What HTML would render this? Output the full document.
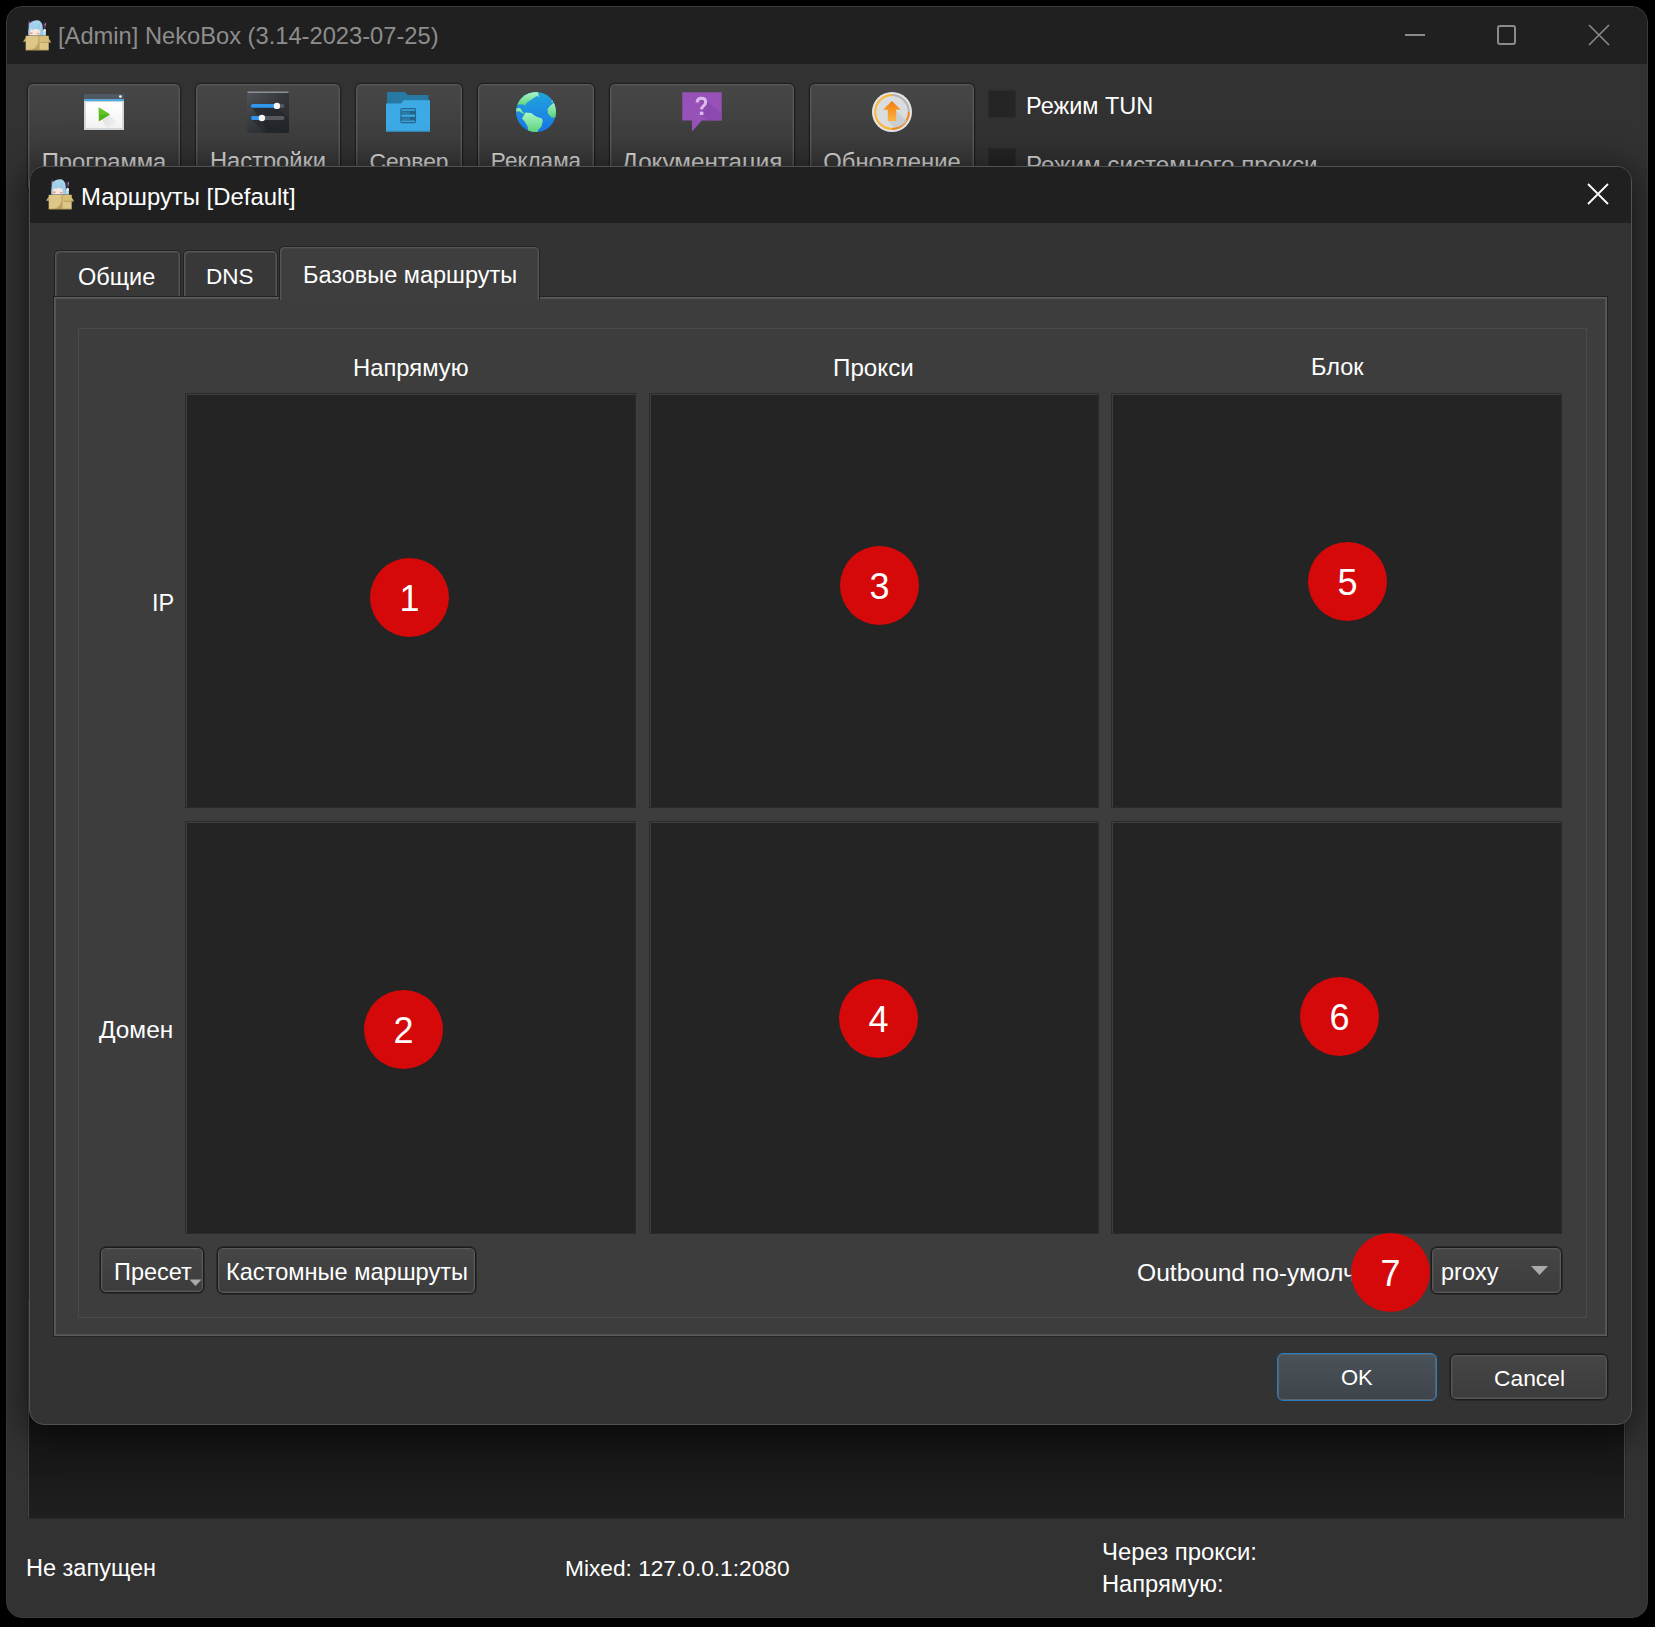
<!DOCTYPE html>
<html><head><meta charset="utf-8">
<style>
*{margin:0;padding:0;box-sizing:border-box}
html,body{width:1655px;height:1627px;overflow:hidden;background:#000}
body{position:relative;font-family:"Liberation Sans",sans-serif;color:#fff}
.a{position:absolute}
.t{position:absolute;white-space:nowrap;line-height:1;font-size:23.5px}
#win{left:6px;top:6px;width:1642px;height:1612px;background:#323232;border:1px solid #3a3a3a;border-radius:16px;overflow:hidden}
#wtitle{left:0;top:0;width:100%;height:57px;background:#202020}
.tb{position:absolute;top:77px;height:110px;border:1px solid #1f1f1f;border-radius:6px;background:linear-gradient(#474747,#3a3a3a 70%);box-shadow:0 0 0 0.6px #282828,inset 0 0 0 1px #5a5a5a,inset 0 0 0 1.7px #4c4c4c}
.tbl{position:absolute;left:0;right:0;top:66px;text-align:center;font-size:23.5px;color:#ddd;line-height:1;white-space:nowrap}
.cb{position:absolute;width:28px;height:28px;background:#252525;border:1px solid #2b2b2b}
#list{left:27px;top:1300px;width:1599px;height:219px;background:linear-gradient(#121212 0%,#141414 55%,#1f1f1f 100%);border:1px solid #2a2a2a;border-top:none;box-shadow:inset 1px 0 0 #474747,inset -1px 0 0 #474747}
#dlg{left:29px;top:166px;width:1603px;height:1259px;background:#333;border:1px solid #525252;border-radius:15px;overflow:hidden;box-shadow:0 6px 36px 4px rgba(0,0,0,.55)}
#dtitle{left:0;top:0;width:100%;height:56px;background:#202020}
.tab{position:absolute;background:#383838;border:1px solid #222;border-bottom:none;border-radius:5px 5px 0 0;box-shadow:inset 1px 1px 0 #575757,inset -1px 0 0 #575757,inset 2px 2px 0 #454545,inset -2px 0 0 #454545}
#pane{left:53px;top:296px;width:1555px;height:1041px;background:#3d3d3d;border:1px solid #222;box-shadow:inset 0 0 0 1px #5a5a5a,inset 0 0 0 2px #525252}
#grp{left:78px;top:328px;width:1509px;height:990px;border:1px solid #4a4a4a}
.cell{position:absolute;background:#242424;border:1px solid #2b2b2b;box-shadow:inset 1px 1px 0 #3e3e3e}
.dot{position:absolute;width:79px;height:79px;border-radius:50%;background:#d50909;color:#fff;font-size:36px;text-align:center;line-height:81px}
.btn{position:absolute;border:1px solid #1b1b1b;border-radius:6px;background:linear-gradient(#464646,#3c3c3c);box-shadow:0 0 0 0.7px #262626,inset 0 0 0 1px #5a5a5a,inset 0 0 0 1.7px #4a4a4a}
</style></head>
<body>
<div id="win" class="a">
  <div id="wtitle" class="a"></div>
</div>

<!-- title bar content -->
<svg class="a" style="left:23px;top:19px" width="28" height="32" viewBox="0 0 28 32">
  <defs><linearGradient id="haira" x1="0" y1="0" x2="0" y2="1"><stop offset="0" stop-color="#a9d6ee"/><stop offset="1" stop-color="#9ccbe6"/></linearGradient></defs>
  <path d="M5.5 0.5 L9 4 L6 8 L4.5 7 Z" fill="#2c3142"/><path d="M6 2.5 L7.5 5 L5.5 7 Z" fill="#d88a9a"/>
  <path d="M19.5 4 L23.8 2.8 L22.5 10 L19.5 9 Z" fill="#2c3142"/><path d="M21.5 5 L23 4 L22 9 Z" fill="#d88a9a"/>
  <path d="M5.2 16.5 Q4.8 6 8 3 Q12 0.5 16 1.5 Q19.8 3.5 19.8 9 L19.8 16.5 Z" fill="url(#haira)"/>
  <path d="M6.8 16.3 Q6.8 11 8.5 10 L16.5 10 Q17 13 16.4 16.3 Z" fill="#fbe8dc"/>
  <ellipse cx="8.3" cy="14.2" rx="1.5" ry="1" fill="#f29a8e"/><ellipse cx="15" cy="14.6" rx="1.3" ry="0.9" fill="#f29a8e"/>
  <path d="M8 3 Q12 6 12.5 10 L9 11 Q8 7 8 3Z" fill="#9fd0ea"/><path d="M13 10 Q14 5 17 4 L17 11Z" fill="#9ccde8"/>
  <rect x="19.6" y="12" width="3.3" height="4.5" fill="#b3e2f6"/>
  <ellipse cx="21.6" cy="11.2" rx="1.4" ry="1.5" fill="#f4eef0"/>
  <path d="M0 22.8 L2.8 18.5 L2.8 22.8 Z" fill="#cfae6a"/>
  <path d="M2.7 16.8 H25.7 V31.1 H2.7 Z" fill="#dcc786"/>
  <path d="M16.2 16.8 H23.5 L28 22.8 H17.5 Z" fill="#d8bf78"/>
  <path d="M17.5 22.8 H28 L27.5 23.8 H17.5 Z" fill="#b99a5a"/>
  <path d="M16 16.8 V31.1" stroke="#b3955a" stroke-width="0.9"/>
  <path d="M8 31.1 Q14 29 16 22 L16 31.1 Z" fill="#bda064"/>
  <path d="M2.7 31.1 H25.7" stroke="#a88b50" stroke-width="0.8"/>
</svg>
<div class="t" style="left:58px;top:25px;color:#8d8d8d;font-size:23.7px">[Admin] NekoBox (3.14-2023-07-25)</div>
<div class="a" style="left:1405px;top:34px;width:20px;height:2px;background:#8a8a8a"></div>
<div class="a" style="left:1497px;top:25px;width:19px;height:20px;border:2px solid #8a8a8a;border-radius:3px"></div>
<svg class="a" style="left:1588px;top:24px" width="22" height="22" viewBox="0 0 22 22"><path d="M1 1 L21 21 M21 1 L1 21" stroke="#8a8a8a" stroke-width="1.6"/></svg>

<!-- toolbar -->
<div class="tb" style="left:27px;top:83px;width:154px"><div class="tbl" style="font-size:23.8px">Программа</div></div>
<div class="tb" style="left:195px;top:83px;width:146px"><div class="tbl" style="font-size:23.7px">Настройки</div></div>
<div class="tb" style="left:355px;top:83px;width:108px"><div class="tbl" style="font-size:22.8px">Сервер</div></div>
<div class="tb" style="left:477px;top:83px;width:118px"><div class="tbl" style="font-size:22.5px">Реклама</div></div>
<div class="tb" style="left:609px;top:83px;width:186px"><div class="tbl" style="font-size:24.2px">Документация</div></div>
<div class="tb" style="left:809px;top:83px;width:166px"><div class="tbl" style="font-size:23.8px">Обновление</div></div>

<!-- icons -->
<svg class="a" style="left:84px;top:94px" width="40" height="36" viewBox="0 0 40 36">
  <defs><linearGradient id="pw" x1="0" y1="0" x2="0" y2="1"><stop offset="0" stop-color="#ffffff"/><stop offset="1" stop-color="#f3f3f3"/></linearGradient>
  <linearGradient id="psh" x1="0" y1="0" x2="1" y2="1"><stop offset="0" stop-color="#000" stop-opacity=".12"/><stop offset="1" stop-color="#000" stop-opacity="0"/></linearGradient></defs>
  <rect x="0" y="0" width="40" height="36" fill="#cfd4d8"/>
  <rect x="0" y="0" width="40" height="5.5" fill="#4f5964"/>
  <rect x="0" y="5.5" width="40" height="1.5" fill="#3daee9"/>
  <rect x="1.8" y="8" width="36.4" height="26.2" fill="url(#pw)"/>
  <circle cx="36.4" cy="2.5" r="1.3" fill="#fff"/>
  <path d="M14.5 21 L24.5 20.5 L33 29 L23 34 Z" fill="url(#psh)"/>
  <path d="M14.8 13.5 L26 20.5 L14.8 27.5 Z" fill="#4fb21a"/>
  <path d="M14.8 13.5 L26 20.5 L14.8 20.5 Z" fill="#62c322"/>
</svg>
<svg class="a" style="left:247px;top:91px" width="42" height="42" viewBox="0 0 42 42">
  <defs><linearGradient id="sg" x1="0" y1="0" x2="1" y2="1"><stop offset="0" stop-color="#50545a"/><stop offset=".5" stop-color="#33373b"/><stop offset="1" stop-color="#25282b"/></linearGradient></defs>
  <rect x="0" y="0.5" width="42" height="41.5" rx="1.5" fill="url(#sg)"/>
  <rect x="0.3" y="0.5" width="41.4" height="1.6" rx="0.8" fill="#8d9093"/>
  <path d="M5 16.5 L30 16.5 L42 28 V42 H22 Z" fill="#22252a" opacity=".7"/>
  <path d="M5 29 L15 29 L42 42 H18 Z" fill="#22252a" opacity=".5"/>
  <rect x="30" y="13" width="7.5" height="3.8" rx="1.9" fill="#55585c"/>
  <rect x="4" y="13" width="26" height="3.8" rx="1.9" fill="#3096f0"/>
  <circle cx="29.9" cy="14.9" r="3.2" fill="#f6f6f6"/>
  <rect x="15" y="25.1" width="22.5" height="3.8" rx="1.9" fill="#55585c"/>
  <rect x="4" y="25.1" width="11" height="3.8" rx="1.9" fill="#3096f0"/>
  <circle cx="14.9" cy="27" r="3.2" fill="#f6f6f6"/>
</svg>
<svg class="a" style="left:386px;top:92px" width="44" height="40" viewBox="0 0 44 40">
  <path d="M1 0 H18.8 L21.8 3 H42.5 V12 H1 Z" fill="#2878a4"/>
  <path d="M0 11.4 H14.8 L17.8 8.3 H44 V39.6 H0 Z" fill="#3daae6"/>
  <path d="M0 38.5 H44 V39.6 H0Z" fill="#3597d0"/>
  <rect x="14.9" y="16.6" width="14.6" height="14" rx="1" fill="none" stroke="#24648a" stroke-width="1.1"/>
  <rect x="15.2" y="18.8" width="14" height="3.8" fill="#24648a"/>
  <rect x="15.2" y="24.8" width="14" height="3.8" fill="#24648a"/>
  <path d="M17 19.6 V22 M19 19.6 V22 M21 19.6 V22 M23 19.6 V22 M17 25.6 V28 M19 25.6 V28 M21 25.6 V28 M23 25.6 V28" stroke="#3daae6" stroke-width="0.7"/>
</svg>
<svg class="a" style="left:516px;top:92px" width="40" height="40" viewBox="0 0 40 40">
  <defs><linearGradient id="og" x1="0" y1="0" x2="0" y2="1"><stop offset="0" stop-color="#22a4de"/><stop offset="1" stop-color="#1876e6"/></linearGradient>
  <linearGradient id="lg" x1="0" y1="0" x2="0" y2="1"><stop offset="0" stop-color="#a8f6c6"/><stop offset="1" stop-color="#5bd27a"/></linearGradient>
  <clipPath id="gc"><circle cx="20" cy="20" r="20"/></clipPath></defs>
  <circle cx="20" cy="20" r="20" fill="url(#og)"/>
  <g clip-path="url(#gc)" fill="url(#lg)">
    <path d="M-1 12.5 L8 12.5 L8.5 14.3 L11 10.5 L17 6.5 L18.8 5.2 L21 4 L23 5 L22 0 L-1 0 Z"/>
    <path d="M-1 16.5 L4 16 L6.5 19.5 L8.5 21.5 L7 22 L3.5 19.5 L-1 19.5 Z"/>
    <path d="M9.5 20.5 L12 20.8 L15 21 L20 24.5 L26 26.5 L26.8 29 L25.5 34.5 L22 38 L21.5 41 L12 41 L11.8 35 L9 30 L6 26.5 Z"/>
    <path d="M37.5 11 L41 10 L41 25.5 L35.5 25.5 L32 21.5 L31.5 17 L34 14 Z"/>
    <path d="M35 9.5 L37 8 L37.5 10.5 Z"/>
  </g>
</svg>
<svg class="a" style="left:682px;top:92px" width="40" height="40" viewBox="0 0 40 40">
  <path d="M0.3 0.3 H39.7 V28.6 H19.9 L10 39.5 V28.6 H0.3 Z" fill="#9752b8"/>
  <path d="M20 6 L39.7 21 V28.6 H26 L17 22Z" fill="#8a47ad" opacity=".8"/>
  <path d="M15.2 10.6 Q15.2 6.2 19.4 6.2 Q23.6 6.2 23.6 10 Q23.6 12.6 21.4 14 Q19.6 15.2 19.6 17.5" fill="none" stroke="#dcb9ec" stroke-width="3.1"/>
  <rect x="17.8" y="19.6" width="3.6" height="3.4" fill="#dcb9ec"/>
</svg>
<svg class="a" style="left:872px;top:92px" width="40" height="40" viewBox="0 0 40 40">
  <defs><linearGradient id="ag" x1="0" y1="0" x2="0" y2="1"><stop offset="0" stop-color="#f47c0c"/><stop offset="1" stop-color="#f9b446"/></linearGradient></defs>
  <circle cx="20" cy="20" r="20" fill="#e3e6e9"/>
  <path d="M20 3.2 A16.8 16.8 0 0 0 20 36.8" fill="none" stroke="#fab63e" stroke-width="2.2"/>
  <path d="M20 3.2 A16.8 16.8 0 0 1 36.8 20" fill="none" stroke="#b9b3ad" stroke-width="2.2"/>
  <path d="M36.8 20 A16.8 16.8 0 0 1 20 36.8" fill="none" stroke="#ee8a22" stroke-width="2.2"/>
  <circle cx="20" cy="20" r="15.2" fill="#d9dde0"/>
  <path d="M24 19 L35 29 Q30 35 22 35.5 L16 29 Z" fill="#c5cacd" opacity=".8"/>
  <path d="M19.9 8.9 L28.7 17.8 H24.1 V29 H15.8 V17.8 H11.1 Z" fill="url(#ag)"/>
</svg>

<div class="cb" style="left:988px;top:90px"></div>
<div class="t" style="left:1026px;top:95px;color:#fff">Режим TUN</div>
<div class="cb" style="left:988px;top:148px"></div>
<div class="t" style="left:1026px;top:153px;color:#ddd;font-size:24.2px">Режим системного прокси</div>

<div id="list" class="a"></div>

<div id="dlg" class="a">
  <div id="dtitle" class="a"></div>
</div>
<svg class="a" style="left:46px;top:178px" width="28" height="32" viewBox="0 0 28 32">
  <defs><linearGradient id="hairb" x1="0" y1="0" x2="0" y2="1"><stop offset="0" stop-color="#a9d6ee"/><stop offset="1" stop-color="#9ccbe6"/></linearGradient></defs>
  <path d="M5.5 0.5 L9 4 L6 8 L4.5 7 Z" fill="#2c3142"/><path d="M6 2.5 L7.5 5 L5.5 7 Z" fill="#d88a9a"/>
  <path d="M19.5 4 L23.8 2.8 L22.5 10 L19.5 9 Z" fill="#2c3142"/><path d="M21.5 5 L23 4 L22 9 Z" fill="#d88a9a"/>
  <path d="M5.2 16.5 Q4.8 6 8 3 Q12 0.5 16 1.5 Q19.8 3.5 19.8 9 L19.8 16.5 Z" fill="url(#hairb)"/>
  <path d="M6.8 16.3 Q6.8 11 8.5 10 L16.5 10 Q17 13 16.4 16.3 Z" fill="#fbe8dc"/>
  <ellipse cx="8.3" cy="14.2" rx="1.5" ry="1" fill="#f29a8e"/><ellipse cx="15" cy="14.6" rx="1.3" ry="0.9" fill="#f29a8e"/>
  <path d="M8 3 Q12 6 12.5 10 L9 11 Q8 7 8 3Z" fill="#9fd0ea"/><path d="M13 10 Q14 5 17 4 L17 11Z" fill="#9ccde8"/>
  <rect x="19.6" y="12" width="3.3" height="4.5" fill="#b3e2f6"/>
  <ellipse cx="21.6" cy="11.2" rx="1.4" ry="1.5" fill="#f4eef0"/>
  <path d="M0 22.8 L2.8 18.5 L2.8 22.8 Z" fill="#cfae6a"/>
  <path d="M2.7 16.8 H25.7 V31.1 H2.7 Z" fill="#dcc786"/>
  <path d="M16.2 16.8 H23.5 L28 22.8 H17.5 Z" fill="#d8bf78"/>
  <path d="M17.5 22.8 H28 L27.5 23.8 H17.5 Z" fill="#b99a5a"/>
  <path d="M16 16.8 V31.1" stroke="#b3955a" stroke-width="0.9"/>
  <path d="M8 31.1 Q14 29 16 22 L16 31.1 Z" fill="#bda064"/>
  <path d="M2.7 31.1 H25.7" stroke="#a88b50" stroke-width="0.8"/>
</svg>
<div class="t" style="left:81px;top:185px;font-size:23.9px">Маршруты [Default]</div>
<svg class="a" style="left:1587px;top:183px" width="22" height="22" viewBox="0 0 22 22"><path d="M1 1 L21 21 M21 1 L1 21" stroke="#fff" stroke-width="1.8"/></svg>

<!-- tabs -->
<div class="tab" style="left:54px;top:250px;width:127px;height:48px"></div>
<div class="tab" style="left:183px;top:250px;width:95px;height:48px"></div>
<div id="pane" class="a"></div>
<div class="tab" style="left:279px;top:246px;width:261px;height:54px;background:#3e3e3e"></div>
<div class="t" style="left:78px;top:266px">Общие</div>
<div class="t" style="left:206px;top:266px;font-size:22.5px">DNS</div>
<div class="t" style="left:303px;top:264px">Базовые маршруты</div>

<div id="grp" class="a"></div>

<div class="t" style="left:353px;top:356px;font-size:23.8px">Напрямую</div>
<div class="t" style="left:833px;top:356px;font-size:24.2px">Прокси</div>
<div class="t" style="left:1311px;top:356px">Блок</div>
<div class="t" style="left:152px;top:592px">IP</div>
<div class="t" style="left:99px;top:1018px;font-size:24.4px">Домен</div>

<div class="cell" style="left:185px;top:393px;width:451px;height:415px"></div>
<div class="cell" style="left:649px;top:393px;width:450px;height:415px"></div>
<div class="cell" style="left:1111px;top:393px;width:451px;height:415px"></div>
<div class="cell" style="left:185px;top:821px;width:451px;height:413px"></div>
<div class="cell" style="left:649px;top:821px;width:450px;height:413px"></div>
<div class="cell" style="left:1111px;top:821px;width:451px;height:413px"></div>

<div class="btn" style="left:100px;top:1247px;width:104px;height:46px"></div>
<div class="t" style="left:114px;top:1261px">Пресет</div>
<svg class="a" style="left:189px;top:1279px" width="13" height="8"><path d="M0.5 0.5 H12.5 L6.5 7 Z" fill="#aaa"/></svg>
<div class="btn" style="left:217px;top:1247px;width:259px;height:47px"></div>
<div class="t" style="left:226px;top:1261px;font-size:23.6px">Кастомные маршруты</div>

<div class="t" style="left:1137px;top:1261px;font-size:24.6px">Outbound по-умолчанию</div>
<div class="btn" style="left:1431px;top:1247px;width:131px;height:47px"></div>
<div class="t" style="left:1441px;top:1261px">proxy</div>
<svg class="a" style="left:1531px;top:1266px" width="18" height="10"><path d="M0 0 H17 L8.5 9 Z" fill="#aaa"/></svg>

<div class="btn" style="left:1277px;top:1353px;width:160px;height:48px;border:1.6px solid #2a7cc0;background:linear-gradient(#4a5259,#3e444a);box-shadow:inset 0 0 0 1px #5b636b"></div>
<div class="t" style="left:1341px;top:1367px;font-size:22px">OK</div>
<div class="btn" style="left:1450px;top:1354px;width:158px;height:46px"></div>
<div class="t" style="left:1494px;top:1367px;font-size:22.8px">Cancel</div>

<!-- status bar -->
<div class="t" style="left:26px;top:1557px">Не запущен</div>
<div class="t" style="left:565px;top:1557px;font-size:22.7px">Mixed: 127.0.0.1:2080</div>
<div class="t" style="left:1102px;top:1540px;font-size:23.9px">Через прокси:</div>
<div class="t" style="left:1102px;top:1573px;font-size:23.7px">Напрямую:</div>

<div class="dot" style="left:370px;top:558px">1</div>
<div class="dot" style="left:840px;top:546px">3</div>
<div class="dot" style="left:1308px;top:542px">5</div>
<div class="dot" style="left:364px;top:990px">2</div>
<div class="dot" style="left:839px;top:979px">4</div>
<div class="dot" style="left:1300px;top:977px">6</div>
<div class="dot" style="left:1351px;top:1233px">7</div>
</body></html>
